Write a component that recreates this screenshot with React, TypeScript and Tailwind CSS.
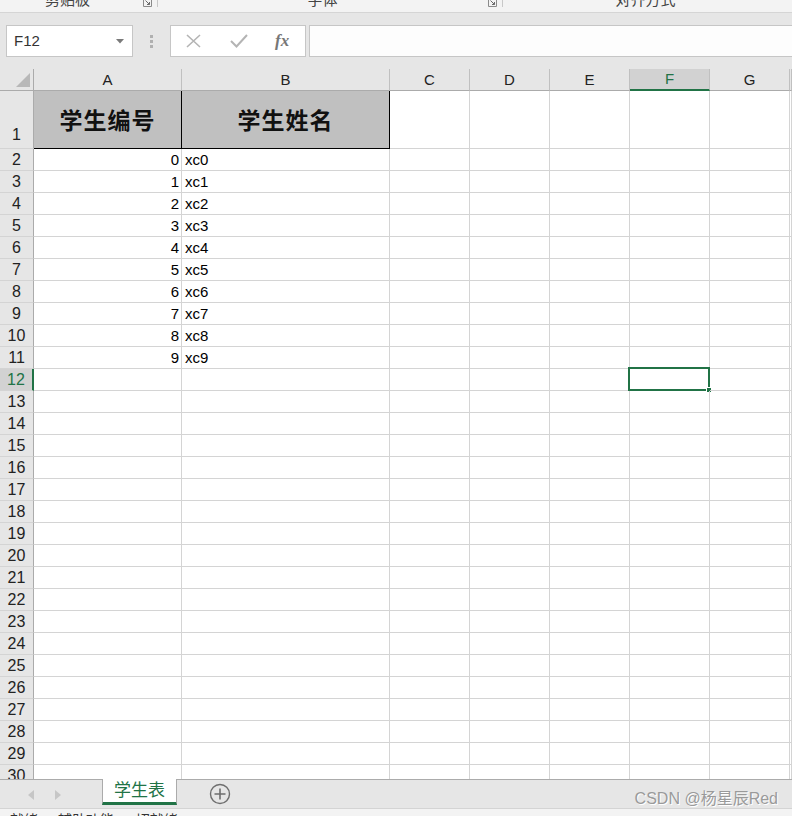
import React from 'react';

// column widths include the right grid line
const COLS = [
  { key: 'A', cls: 'w-[148px]' },
  { key: 'B', cls: 'w-[208px]' },
  { key: 'C', cls: 'w-[80px]' },
  { key: 'D', cls: 'w-[80px]' },
  { key: 'E', cls: 'w-[80px]' },
  { key: 'F', cls: 'w-[80px]' },
  { key: 'G', cls: 'w-[80px]' },
  { key: 'H', cls: 'flex-1' },
];

const students = Array.from({ length: 10 }, (_, i) => ({ id: i, name: 'xc' + i }));

const font = { fontFamily: '"Liberation Sans", "Noto Sans CJK SC", sans-serif' };

function Launcher() {
  return (
    <svg width="9" height="7" viewBox="0 0 9 7" className="shrink-0">
      <path d="M0.5 0 V6.5 H8.5 V0" fill="none" stroke="#8a8a8a" strokeWidth="1" />
      <path d="M2.5 0.5 L6.5 4.5 M6.5 2 V4.5 H4" fill="none" stroke="#6a6a6a" strokeWidth="1" />
    </svg>
  );
}

function RibbonStrip() {
  return (
    <div className="h-[13px] shrink-0 bg-[#f3f3f3] border-b border-[#d5d5d5] flex items-start overflow-hidden text-[15px] text-[#444]">
      <div className="w-[143px] flex justify-center">
        <span className="mt-[-11px] ml-[-8px]">剪贴板</span>
      </div>
      <Launcher />
      <div className="w-[5px]" />
      <div className="w-px h-[7px] bg-[#c8c8c8]" />
      <div className="w-[330px] flex justify-center">
        <span className="mt-[-11px] ml-[-1px]">字体</span>
      </div>
      <Launcher />
      <div className="w-[5px]" />
      <div className="w-px h-[7px] bg-[#c8c8c8]" />
      <div className="flex-1 flex justify-center">
        <span className="mt-[-11px] ml-[-4px]">对齐方式</span>
      </div>
    </div>
  );
}

function FormulaBar() {
  return (
    <div className="h-[56px] shrink-0 bg-[#e6e6e6] flex items-start pt-[12px] pl-[6px]">
      <div className="w-[127px] h-[32px] bg-white border border-[#c6c6c6] flex items-center pl-[7px] pr-[8px] text-[15px] text-[#333]">
        <span>F12</span>
        <svg width="8" height="5" viewBox="0 0 8 5" className="ml-auto">
          <path d="M0 0 H8 L4 4.5 Z" fill="#7a7a7a" />
        </svg>
      </div>
      <div className="w-[37px] h-[32px] flex flex-col items-center justify-center gap-[2px]">
        <div className="w-[3px] h-[3px] bg-[#b0b0b0]" />
        <div className="w-[3px] h-[3px] bg-[#b0b0b0]" />
        <div className="w-[3px] h-[3px] bg-[#b0b0b0]" />
      </div>
      <div className="w-[136px] h-[32px] bg-white border border-[#c6c6c6] flex items-center pl-[15px]">
        <svg width="15" height="14" viewBox="0 0 15 14">
          <path d="M1 1 L14 13 M14 1 L1 13" stroke="#b4b4b4" strokeWidth="1.6" fill="none" />
        </svg>
        <svg width="18" height="14" viewBox="0 0 18 14" className="ml-[29px]">
          <path d="M1 7 L6.5 12.5 L17 1" stroke="#b4b4b4" strokeWidth="2" fill="none" />
        </svg>
        <span className="ml-[27px] text-[17px] italic font-bold text-[#777]" style={{ fontFamily: '"Liberation Serif", serif' }}>
          fx
        </span>
      </div>
      <div className="flex-1 h-[32px] ml-[3px] bg-[#fdfdfd] border border-[#c6c6c6] border-r-0" />
    </div>
  );
}

function ColumnHeader() {
  return (
    <div className="h-[22px] shrink-0 flex bg-[#e6e6e6] text-[15px] text-[#222]">
      <div className="w-[34px] border-r border-b border-[#ababab] flex items-end justify-end pr-[3px] pb-[3px]">
        <svg width="14" height="14" viewBox="0 0 14 14">
          <path d="M14 0 V14 H0 Z" fill="#b8b8b8" />
        </svg>
      </div>
      {COLS.map((c) =>
        c.key === 'F' ? (
          <div key={c.key} className={`${c.cls} bg-[#d2d2d2] border-r border-[#c0c0c0] border-b-2 border-b-[#217346] flex items-center justify-center pt-[1px] text-[#217346]`}>
            {c.key}
          </div>
        ) : (
          <div key={c.key} className={`${c.cls} border-r border-[#c0c0c0] border-b border-b-[#ababab] flex items-center justify-center pt-[1px]`}>
            {c.key === 'H' ? '' : c.key}
          </div>
        )
      )}
    </div>
  );
}

function TitleRow() {
  return (
    <div className="h-[58px] shrink-0 flex">
      <div className="w-[34px] bg-[#e6e6e6] border-r border-b border-r-[#ababab] border-b-[#d4d4d4] flex items-end justify-center pb-[1px] text-[16px] text-[#222]">
        1
      </div>
      {COLS.map((c, i) =>
        i < 2 ? (
          <div
            key={c.key}
            className={`${c.cls} bg-[#c0c0c0] border-r border-b border-black flex items-center justify-center text-[23px] font-bold text-[#111]`}
            style={{ fontFamily: '"Noto Sans CJK SC", sans-serif', letterSpacing: '1px' }}
          >
            {i === 0 ? '学生编号' : '学生姓名'}
          </div>
        ) : (
          <div key={c.key} className={`${c.cls} border-r border-b border-[#d4d4d4]`} />
        )
      )}
    </div>
  );
}

function DataRow({ n }: { n: number }) {
  const s = students[n - 2];
  const sel = n === 12;
  return (
    <div className="h-[22px] flex shrink-0">
      {sel ? (
        <div className="w-[34px] bg-[#d2d2d2] border-b border-[#d4d4d4] border-r-2 border-r-[#217346] flex items-center justify-center pt-[1px] text-[16px] text-[#217346]">
          {n}
        </div>
      ) : (
        <div className="w-[34px] bg-[#e6e6e6] border-r border-b border-r-[#ababab] border-b-[#d4d4d4] flex items-center justify-center pt-[1px] text-[16px] text-[#222]">
          {n}
        </div>
      )}
      {COLS.map((c, i) => (
        <div key={c.key} className={`${c.cls} relative border-r border-b border-[#d4d4d4] flex items-center pt-[2px] text-[15px] text-black`}>
          {s && i === 0 && <span className="ml-auto pr-[2px]">{s.id}</span>}
          {s && i === 1 && <span className="pl-[3px]">{s.name}</span>}
          {sel && c.key === 'F' && (
            <div className="absolute left-[-2px] right-[-1px] top-[-2px] bottom-[-1px] border-2 border-[#217346]">
              <div className="absolute right-[-4px] bottom-[-4px] w-[6px] h-[6px] bg-[#217346] border border-white" />
            </div>
          )}
        </div>
      ))}
    </div>
  );
}

function Grid() {
  const rows = Array.from({ length: 29 }, (_, i) => i + 2);
  return (
    <div className="h-[710px] shrink-0 overflow-hidden flex flex-col bg-white">
      <ColumnHeader />
      <TitleRow />
      {rows.map((n) => (
        <DataRow key={n} n={n} />
      ))}
    </div>
  );
}

function SheetTabs() {
  return (
    <div className="h-[30px] shrink-0 bg-[#e6e6e6] border-t border-[#ababab] border-b border-b-[#d4d4d4] flex items-start">
      <div className="flex items-center gap-[21px] pl-[28px] pt-[10px]">
        <svg width="6" height="10" viewBox="0 0 6 10"><path d="M6 0 V10 L0 5 Z" fill="#c6c6c6" /></svg>
        <svg width="6" height="10" viewBox="0 0 6 10"><path d="M0 0 V10 L6 5 Z" fill="#c6c6c6" /></svg>
      </div>
      <div className="ml-[41px] mt-[-1px] w-[75px] h-[26px] bg-white border-l border-r border-[#ababab] border-b-[3px] border-b-[#217346] flex items-center justify-center text-[17px] text-[#217346]">
        学生表
      </div>
      <svg width="22" height="22" viewBox="0 0 22 22" className="ml-[32px] mt-[3px]">
        <circle cx="11" cy="11" r="9.5" fill="none" stroke="#6e6e6e" strokeWidth="1.4" />
        <path d="M11 5.5 V16.5 M5.5 11 H16.5" stroke="#6e6e6e" strokeWidth="1.6" />
      </svg>
      <div
        className="ml-auto mr-[14px] mt-[7px] text-[16px] text-[#9a9a9a]"
        style={{ textShadow: '1px 1px 0 #fff' }}
      >
        CSDN @杨星辰Red
      </div>
    </div>
  );
}

function StatusBar() {
  return (
    <div className="h-[8px] shrink-0 bg-[#f3f3f3] overflow-hidden text-[14px] text-[#333] pl-[10px]">
      <div className="pt-[1px] flex gap-[20px]">
        <span>就绪</span>
        <span>辅助功能: 一切就绪</span>
      </div>
    </div>
  );
}

export default function App() {
  return (
    <div className="w-[792px] h-[816px] overflow-hidden bg-[#e6e6e6] flex flex-col" style={font}>
      <RibbonStrip />
      <FormulaBar />
      <Grid />
      <SheetTabs />
      <StatusBar />
    </div>
  );
}
